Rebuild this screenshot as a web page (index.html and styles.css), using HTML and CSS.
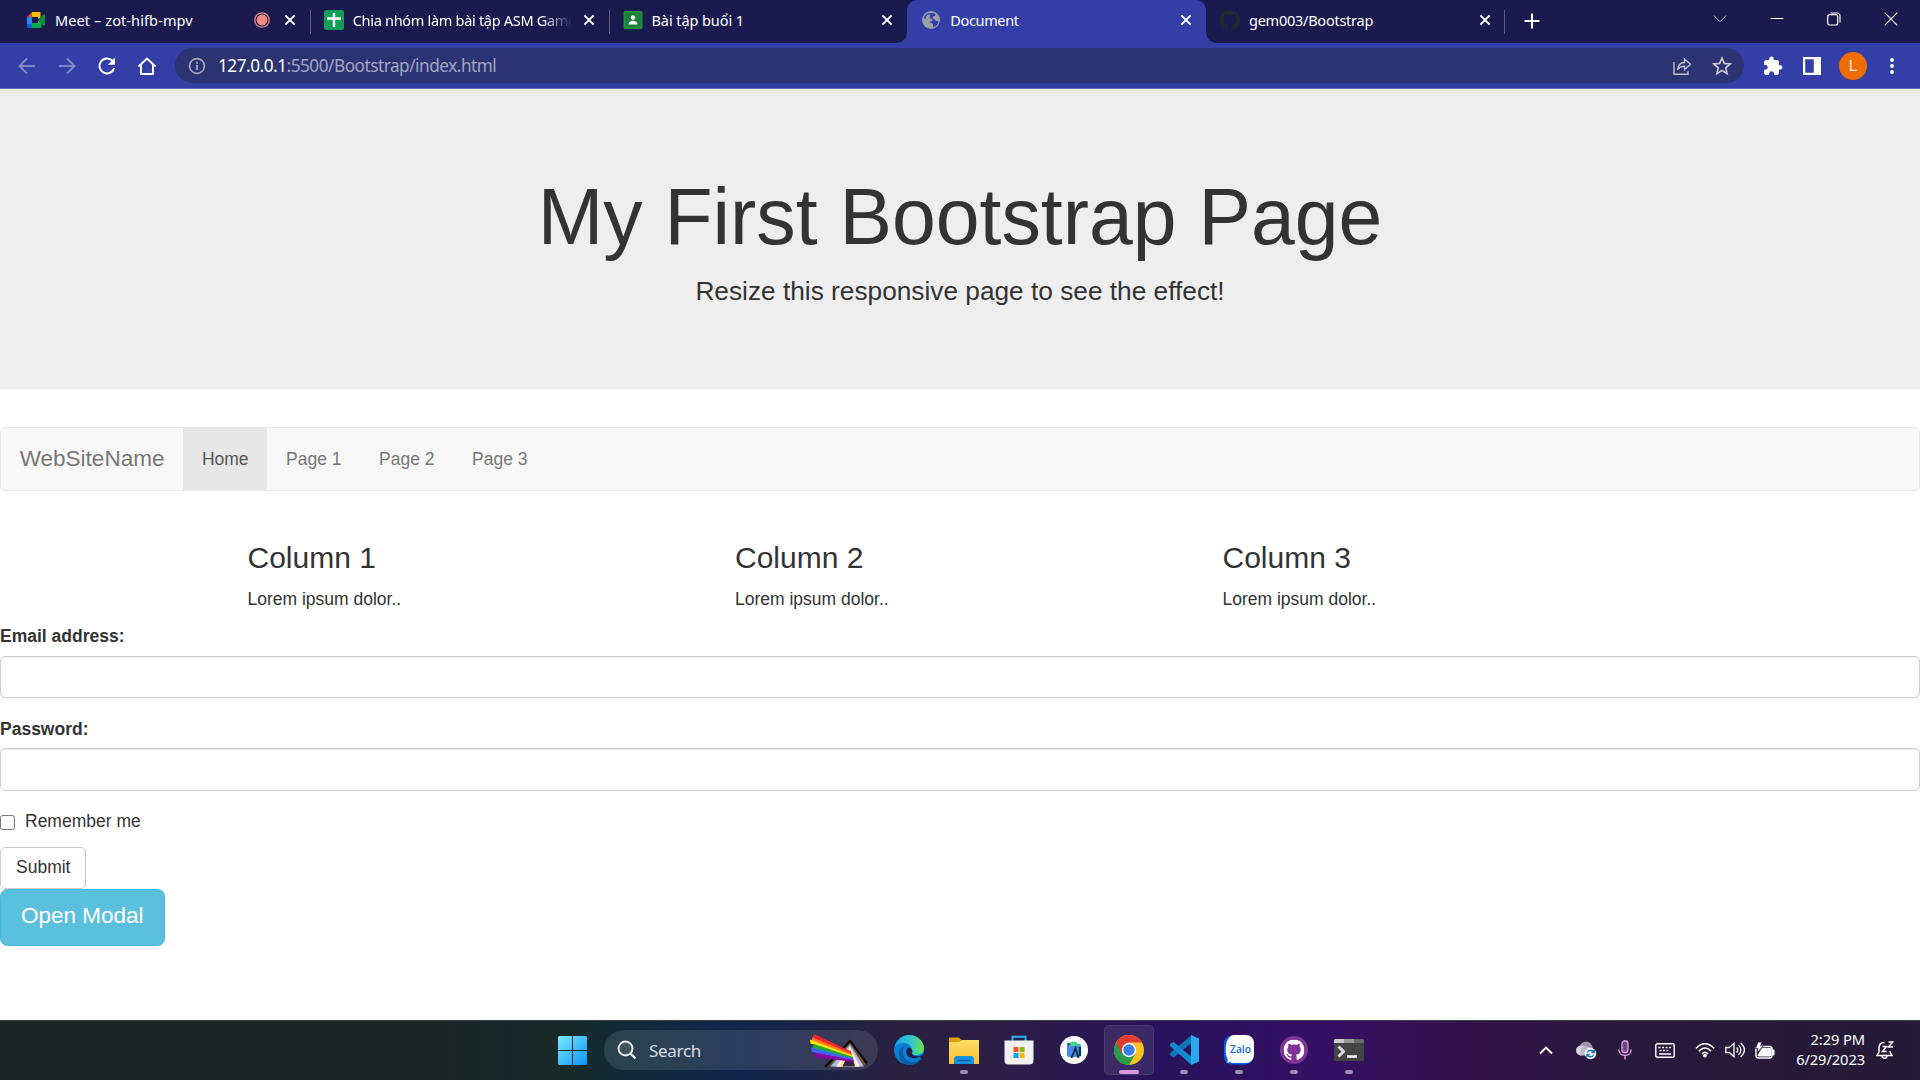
FILE: index.html
```html
<!DOCTYPE html>
<html lang="en">
<head>
<meta charset="utf-8">
<title>Document</title>
<link rel="stylesheet" href="styles.css">
</head>
<body>
<svg class="defs" width="0" height="0">
  <symbol id="x" viewBox="0 0 12 12"><path d="M1.400 1.400l9.200 9.200M10.600 1.400L1.400 10.600" stroke="#fff" stroke-width="1.900"/></symbol>
  <symbol id="octocat" viewBox="0 0 16 16"><path d="M8 0C3.58 0 0 3.58 0 8c0 3.54 2.29 6.53 5.47 7.59.4.07.55-.17.55-.38 0-.19-.01-.82-.01-1.49-2.01.37-2.53-.49-2.69-.94-.09-.23-.48-.94-.82-1.13-.28-.15-.68-.52-.01-.53.63-.01 1.08.58 1.23.82.72 1.21 1.87.87 2.33.66.07-.52.28-.87.51-1.07-1.78-.2-3.64-.89-3.64-3.95 0-.87.31-1.59.82-2.15-.08-.2-.36-1.02.08-2.12 0 0 .67-.21 2.2.82.64-.18 1.32-.27 2-.27s1.36.09 2 .27c1.53-1.04 2.2-.82 2.2-.82.44 1.1.16 1.92.08 2.12.51.56.82 1.27.82 2.15 0 3.07-1.87 3.75-3.65 3.95.29.25.54.73.54 1.48 0 1.07-.01 1.93-.01 2.2 0 .21.15.46.55.38A8.01 8.01 0 0 0 16 8c0-4.42-3.58-8-8-8z"/></symbol>
</svg>

<header class="tabs">
  <div class="tab meet">
    <svg class="fav" viewBox="0 0 20 20"><path d="M1 7h5v7H1z" fill="#2684fc"/><path d="M1 7l5-5v5z" fill="#ea4335"/><path d="M6 2h8.500v5.500L12 9V7H6z" fill="#ffba00"/><path d="M1 14h5v4H2.500A1.500 1.500 0 0 1 1 16.500z" fill="#0066da"/><path d="M6 13h6v-2l3.500-2.500V16.500A1.500 1.500 0 0 1 14 18H6z" fill="#00ac47"/><path d="M12 10l6-6 1 .5v11l-1 .5z" fill="#148b3c"/></svg>
    <span class="tab-title">Meet – zot-hifb-mpv</span>
    <svg class="rec" viewBox="0 0 16 16"><circle cx="8" cy="8" r="7.200" fill="none" stroke="#f28b82" stroke-width="1.300"/><circle cx="8" cy="8" r="5.400" fill="#f28b82"/></svg>
    <svg class="close"><use href="#x"/></svg>
  </div>
  <div class="tab line sheet">
    <svg class="fav" viewBox="0 0 20 20"><rect width="20" height="20" rx="2" fill="#0f9d58"/><path d="M10 3v14M3 8.500h14" stroke="#fff" stroke-width="2.400"/></svg>
    <span class="tab-title fade">Chia nhóm làm bài tập ASM Game</span>
    <svg class="close"><use href="#x"/></svg>
  </div>
  <div class="tab line classroom">
    <svg class="fav" viewBox="0 0 20 20"><rect x=".5" y="1" width="19" height="18" rx="1.500" fill="#1e8e3e"/><rect x="2.500" y="3" width="15" height="14" fill="#188038"/><circle cx="10" cy="7.500" r="2.200" fill="#fff"/><path d="M5.500 14.500c0-5 9-5 9 0z" fill="#fff"/></svg>
    <span class="tab-title">Bài tập buổi 1</span>
    <svg class="close"><use href="#x"/></svg>
  </div>
  <div class="tab active">
    <svg class="fav" viewBox="0 0 20 20"><circle cx="10" cy="10" r="9" fill="#9aa0a6"/><path d="M9 3c3 0 5 0 5.500 1.500S12 6 11.500 7.500s2 1 2.500 2.500 2.500.5 3.500 1.500c-.5 3-2.500 5-5 5.800-1-.8 0-2-.5-3.300s-2-1-3-1.500.5-2-.5-2.500-2.500 0-3.500-1S2.700 8 2.700 8C3.500 5 6 3 9 3z" fill="#333ea7"/><path d="M6.500 5c2-1 3.500 0 2.500 1.500s.5 2 2 3-.5 2.500-2 2-2-2-3.500-2.500S5 6 6.500 5z" fill="#9aa0a6"/></svg>
    <span class="tab-title">Document</span>
    <svg class="close"><use href="#x"/></svg>
  </div>
  <div class="tab github">
    <svg class="fav" fill="#24292f"><use href="#octocat"/></svg>
    <span class="tab-title">gem003/Bootstrap</span>
    <svg class="close"><use href="#x"/></svg>
  </div>
  <svg class="newtab" viewBox="0 0 16 16"><path d="M8 .5v15M.5 8h15" stroke="#fff" stroke-width="2.100"/></svg>
  <div class="winctl">
    <svg viewBox="0 0 14 14"><path d="M.8 3.500L7 9.800l6.200-6.300" fill="none" stroke="#c9c9dd"/></svg>
    <svg viewBox="0 0 14 14"><path d="M.5 6.500h13" stroke="#fff"/></svg>
    <svg viewBox="0 0 14 14"><rect x=".7" y="2.700" width="10" height="10.300" rx="2" fill="none" stroke="#fff" stroke-width="1.200"/><path d="M3.500 1H10a3 3 0 0 1 3 3v6.500" fill="none" stroke="#fff" stroke-width="1.100"/></svg>
    <svg viewBox="0 0 14 14"><path d="M.7.7l12.600 12.600M13.300.7L.7 13.300" stroke="#fff" stroke-width="1.100"/></svg>
  </div>
</header>

<div class="toolbar">
  <svg class="nav" viewBox="0 0 20 20" fill="none" stroke="#8288c9" stroke-width="1.900"><path d="M18 10H3M10 2.500L2.500 10l7.500 7.500"/></svg>
  <svg class="nav" viewBox="0 0 20 20" fill="none" stroke="#8288c9" stroke-width="1.900"><path d="M2 10h15M10 2.500l7.500 7.500-7.500 7.500"/></svg>
  <svg class="nav" viewBox="0 0 20 20"><path d="M15.500 4.800A7.500 7.500 0 1 0 17.200 12" fill="none" stroke="#fff" stroke-width="2"/><path d="M18 1.500v7.200h-7.200z" fill="#fff"/></svg>
  <svg class="nav" viewBox="0 0 20 20"><path d="M1.500 10.500L10 2.500l8.500 8M4 9v9h12V9" fill="none" stroke="#fff" stroke-width="2"/></svg>
  <div class="omnibox">
    <svg class="info" viewBox="0 0 18 18"><circle cx="9" cy="9" r="7.400" fill="none" stroke="#a6a9b8" stroke-width="1.700"/><path d="M9 8v5M9 4.800v1.900" stroke="#a6a9b8" stroke-width="1.800"/></svg>
    <span class="url"><b>127.0.0.1</b>:5500/Bootstrap/index.html</span>
    <svg class="share" viewBox="0 0 20 20" fill="none" stroke="#bdbfca" stroke-width="1.400"><path d="M2 6v12.200h14V15"/><path d="M5.500 14c.5-5 3-7.500 7-7.500V3l6 5.300-6 5.300v-3.400c-3.500 0-5.500 1.300-7 3.800z"/></svg>
    <svg class="star" viewBox="0 0 20 20"><path d="M10 2l2.300 5.400 5.900.5-4.500 3.900 1.400 5.800-5.100-3.100-5.100 3.100 1.400-5.800-4.500-3.900 5.900-.5z" fill="none" stroke="#c8cad3" stroke-width="1.600"/></svg>
  </div>
  <svg class="ext" viewBox="0 0 20 20"><path d="M17.200 9.200h-1.300V5.700c0-1-.8-1.800-1.800-1.800h-3.400V2.800a2.200 2.200 0 0 0-4.400 0v1.100H2.900c-1 0-1.800.8-1.800 1.800v3.200h1.300a2.400 2.400 0 0 1 0 4.800H1.100v3.400c0 1 .8 1.800 1.800 1.800h3.300v-1.300a2.400 2.400 0 0 1 4.800 0v1.300h3.100c1 0 1.800-.8 1.800-1.800v-3.500h1.300a2.200 2.200 0 0 0 0-4.400z" fill="#fff"/></svg>
  <svg class="panel" viewBox="0 0 18 18"><path d="M0 0h18v18H0zM2.200 2.200v13.600h8.600V2.200z" fill="#fff" fill-rule="evenodd"/></svg>
  <span class="avatar">L</span>
  <svg class="dots" viewBox="0 0 4 16" fill="#fff"><circle cx="2" cy="2" r="1.900"/><circle cx="2" cy="8" r="1.900"/><circle cx="2" cy="14" r="1.900"/></svg>
</div>

<main class="page">
  <section class="jumbotron">
    <h1>My First Bootstrap Page</h1>
    <p>Resize this responsive page to see the effect!</p>
  </section>
  <nav class="navbar">
    <a class="brand">WebSiteName</a>
    <a class="link current">Home</a>
    <a class="link">Page 1</a>
    <a class="link">Page 2</a>
    <a class="link">Page 3</a>
  </nav>
  <div class="row">
    <div class="col"><h3>Column 1</h3><p>Lorem ipsum dolor..</p></div>
    <div class="col"><h3>Column 2</h3><p>Lorem ipsum dolor..</p></div>
    <div class="col"><h3>Column 3</h3><p>Lorem ipsum dolor..</p></div>
  </div>
  <form>
    <div class="group"><label for="email">Email address:</label><input class="control" type="email" id="email"></div>
    <div class="group"><label for="pwd">Password:</label><input class="control" type="password" id="pwd"></div>
    <label class="check"><input type="checkbox">Remember me</label>
    <button class="btn" type="button">Submit</button>
  </form>
  <button class="btn btn-info" type="button">Open Modal</button>
</main>

<footer class="taskbar">
  <svg class="start" viewBox="0 0 29 29"><defs><linearGradient id="win" x1="0" y1="0" x2="29" y2="29" gradientUnits="userSpaceOnUse"><stop offset="0" stop-color="#7deaff"/><stop offset="1" stop-color="#0a94fa"/></linearGradient></defs><path d="M1 0h13v14H0V1zM15 0h13l1 1v13H15zM0 15h14v14H1l-1-1zM15 15h14v13l-1 1H15z" fill="url(#win)"/></svg>
  <div class="search">
    <svg class="glass" viewBox="0 0 20 20"><circle cx="8.500" cy="8.500" r="7" fill="#ffffff18" stroke="#e8ebef" stroke-width="1.900"/><path d="M13.500 13.500l5 5" stroke="#e8ebef" stroke-width="2.300"/></svg>
    <span>Search</span>
    <svg class="pride" viewBox="0 0 60 34">
      <path d="M15 32.500L41 5.500 59 28.500l-4 4z" fill="#080808"/>
      <path d="M18.500 32.500L41 8.500 57 30l-2 2.500z" fill="#7c4d30"/>
      <path d="M21.500 32.500L41 10.500 55 32.500z" fill="#76d0f1"/>
      <path d="M24.500 32.500L41 12 53 32.500z" fill="#f6aac3"/>
      <path d="M27.500 32.500L41 13 50.500 32.500z" fill="#fff"/>
      <path d="M30.500 32.500L41 14 48 32.500z" fill="#ffe088"/>
      <path d="M33.500 32.500L41 16l5 16.500z" fill="#2e2342"/>
      <path d="M5 0l37 17.500 1 3.500L3.500 4z" fill="#f5222d"/>
      <path d="M3.500 3.500L43 19.500v2.500L2 7.500z" fill="#ff7a1a"/>
      <path d="M1 5.500l42.500 16v2L1.500 9.500z" fill="#ffe600"/>
      <path d="M5 10l39 13v2L3 14.500z" fill="#21a83a"/>
      <path d="M2 13.500l42.500 11v2L3 18z" fill="#4263ff"/>
      <path d="M5 18.500l39.500 7.500.500 2L5 23z" fill="#8e00a8"/>
    </svg>
  </div>
  <div class="apps">
    <div class="app"><svg viewBox="0 0 30 30"><defs><linearGradient id="edge1" x1="0" x2="1"><stop offset="0" stop-color="#1ba0e7"/><stop offset=".55" stop-color="#34c6cf"/><stop offset="1" stop-color="#69e448"/></linearGradient></defs><circle cx="15" cy="15" r="15" fill="#087fd5"/><path d="M.8 12C3 4 9 0 15 0c9 0 15 7 15 13 0 5-4 7-7.500 7-4 0-6-1.500-5.500-3 1.500-2 1-7-4-8.500C8 7 3 9 .8 12z" fill="url(#edge1)"/><path d="M12 10c-4 3-4 8-2 12 3 6 10 7 17 2-3 4-7 6-12 6C8 30 5 24 5 19c0-5 3-8 7-9z" fill="#0c59a4"/><path d="M14.500 12.500c-3 2-3 6-.5 8.500 3 3 8 3 12 .5l4-2.500v3l-3 2c-1-1-2-3-2-3-3 1-7-.5-7-3 1.500-1.500 0-5-3.500-5.500z" fill="#24204a"/></svg></div>
    <div class="app open"><svg viewBox="0 0 30 30"><defs><linearGradient id="folder" x2="0" y2="1"><stop stop-color="#ffdc68"/><stop offset="1" stop-color="#fdc12e"/></linearGradient></defs><path d="M0 2.500h10l3 3V9H0z" fill="#e09f08"/><path d="M0 7h10l3-2h17v24H0z" fill="url(#folder)"/><path d="M5 29v-5a3 3 0 0 1 3-3h14a3 3 0 0 1 3 3v5z" fill="#168fdf"/><path d="M9 25.500h12" stroke="#0a60ab" stroke-width="1.500" stroke-linecap="round"/></svg></div>
    <div class="app"><svg viewBox="0 0 30 30"><path d="M8.500 6V1.700h13V6" fill="none" stroke="#24b3ed" stroke-width="2"/><path d="M.5 5.500h29v20a4 4 0 0 1-4 4h-21a4 4 0 0 1-4-4z" fill="#f1f1f2"/><path d="M9.500 12h5v5h-5z" fill="#f35325"/><path d="M15.500 12h5v5h-5z" fill="#81bc06"/><path d="M9.500 18h5v5h-5z" fill="#05a6f0"/><path d="M15.500 18h5v5h-5z" fill="#ffba08"/></svg></div>
    <div class="app"><svg viewBox="0 0 30 30"><circle cx="15" cy="15" r="14" fill="#fff"/><rect x="8" y="9" width="14" height="13" rx="2" fill="#4587f5"/><path d="M9 10c1-4 9-5 10-1l1 2H9z" fill="#3ddc84"/><path d="M8 8l4 1-3 2z" fill="#073042"/><path d="M12.500 23l4-10 3 10M21 12v9" fill="none" stroke="#083042" stroke-width="1.900"/></svg></div>
    <div class="app open focus"><svg viewBox="0 0 30 30"><circle cx="15" cy="15" r="15" fill="#fcc31e"/><path d="M2 7.500A15 15 0 0 0 15 30l6.500-11.200L15 15z" fill="#269c4a"/><path d="M15 7.500h13A15 15 0 0 0 2 7.500L8.500 19 15 15z" fill="#e33b2e"/><circle cx="15" cy="15" r="7.200" fill="#fff"/><circle cx="15" cy="15" r="5.700" fill="#397fec"/></svg></div>
    <div class="app open"><svg viewBox="0 0 30 30"><path d="M22 .5v8L4.500 22.500 1 20v-1.800z" fill="#0b75b8"/><path d="M22 29.500v-8L4.500 7 1 9v2z" fill="#128bd0"/><path d="M22 0l8 3.500v23L22 30z" fill="#29a9f2"/></svg></div>
    <div class="app open"><svg viewBox="0 0 30 30"><rect y=".5" width="29" height="29" rx="8" fill="#0563ea"/><path d="M10 0h12a8 8 0 0 1 8 8v12a8 8 0 0 1-8 8H10c-2 0-3-.5-4-1l-4 1c2-1 2-2 1.500-4C1 19 1 7 5 3c1.500-2 3-3 5-3z" fill="#fff"/><text x="6" y="17.500" class="zalo" textLength="21" lengthAdjust="spacingAndGlyphs">Zalo</text></svg></div>
    <div class="app open"><svg viewBox="0 0 30 30"><circle cx="15" cy="15" r="14" fill="#813395"/><svg x="4.500" y="4.500" width="21" height="21" fill="#fff"><use href="#octocat"/></svg></svg></div>
    <div class="app open"><svg viewBox="0 0 30 30"><path d="M0 5.500a1.500 1.500 0 0 1 1.500-1.500h27A1.500 1.500 0 0 1 30 5.500V24.500a1.500 1.500 0 0 1-1.500 1.500h-27A1.500 1.500 0 0 1 0 24.500z" fill="#444"/><path d="M0 8V5.500A1.500 1.500 0 0 1 1.500 4H10v4z" fill="#ccc"/><path d="M10 4h10v4H10z" fill="#999"/><path d="M20 4h8.500A1.500 1.500 0 0 1 30 5.500V8H20z" fill="#686868"/><path d="M4.500 11.500l5 5-5 5" fill="none" stroke="#d8d8d8" stroke-width="3"/><path d="M13 21.500h10" stroke="#fff" stroke-width="2.500"/></svg></div>
  </div>
  <div class="tray">
    <svg class="t-up" viewBox="0 0 14 10"><path d="M1 8.500L7 2.500l6 6" fill="none" stroke="#fff" stroke-width="1.900"/></svg>
    <svg class="t-cloud" viewBox="0 0 22 20"><circle cx="11" cy="8" r="6.500" fill="#9b97a6"/><circle cx="6" cy="10.500" r="5" fill="#d8d6df"/><path d="M6 8c6-4 12 0 12 5v2.500H5z" fill="#bdb8c8"/><circle cx="15.500" cy="13.500" r="5.700" fill="#fff"/><path d="M12 12.500c1.500-3 5.500-3 7 0M12 14.500c1.500 3 5.500 3 7 0M19.200 9.500v3h-3M11.800 17.500v-3h3" fill="none" stroke="#1372c4" stroke-width="1.300"/></svg>
    <svg class="t-mic" viewBox="0 0 14 20"><rect x="4" y=".8" width="6" height="12" rx="3" fill="#714b80" stroke="#d59bdc" stroke-width="1.400"/><path d="M.8 9.500c0 8 12.400 8 12.400 0M7 15.500v4" fill="none" stroke="#d59bdc" stroke-width="1.500"/></svg>
    <svg class="t-key" viewBox="0 0 20 15"><rect x=".8" y=".8" width="18.400" height="13.400" rx="1.500" fill="none" stroke="#fff" stroke-width="1.400"/><path d="M3.500 4.500h2m1.500 0h2m1.500 0h2m1.500 0h2M4.500 7.500h2m1.500 0h2m1.500 0h2M4 11h12" stroke="#fff" stroke-width="1.500"/></svg>
    <svg class="t-wifi" viewBox="0 0 20 16"><path d="M1 6.500c5-6.500 13-6.500 18 0M4 9.300c3.500-4.500 8.500-4.500 12 0M6.900 12c2-2.500 4.200-2.500 6.200 0" fill="none" stroke="#fff" stroke-width="1.500"/><circle cx="10" cy="13.600" r="1.900" fill="#fff"/></svg>
    <svg class="t-vol" viewBox="0 0 20 16"><path d="M.8 5.500h3.500L9 1.300v13.400l-4.700-4.200H.8zM11.500 5.500c1.500 1.500 1.500 3.500 0 5M13.500 3.200c3.300 3 3.300 6.600 0 9.600M15.700 1c5 4.500 5 9.500 0 14" fill="none" stroke="#fff" stroke-width="1.300"/></svg>
    <svg class="t-bat" viewBox="0 0 20 17"><rect x="1" y="4.500" width="16" height="11.500" rx="2.500" fill="none" stroke="#fff" stroke-width="1.500"/><path d="M3 13.500l4-7h8.500v7.500H3.500zM17.500 8h1.500v5h-1.500z" fill="#fff" stroke="#fff"/><path d="M3 0h4L5.500 3.500h3L2 11l1-4.500H.5z" fill="#fff" stroke="#271a3b" stroke-width=".7"/></svg>
    <div class="clock"><span>2:29 PM</span><span>6/29/2023</span></div>
    <svg class="t-bell" viewBox="0 0 18 18"><path d="M8.500 1.500C4 1.500 3 4.500 3 7v4L1 14.500h15L14 11v-1M6 15c.5 3 4.500 3 5 0" fill="none" stroke="#fff" stroke-width="1.500"/><path d="M6.500 5.500h4l-4 5h4.300M12.500 1h4.200l-4.200 5H17" fill="none" stroke="#fff" stroke-width="1.500"/></svg>
  </div>
</footer>
</body>
</html>
```
FILE: styles.css
```css
* { box-sizing: border-box; }
body {
  margin: 0; width: 1920px; height: 1080px; overflow: hidden;
  display: grid; grid-template-rows: 43px 46px 931px 60px;
  background: #fff; color: #333;
  font-family: "Liberation Sans", Arial, sans-serif; font-size: 17.5px; line-height: 25px;
}
svg { display: block; flex: none; }
.defs { position: absolute; }

.tabs { display: flex; background: #1b1a4e; padding-left: 11px; font-family: "Noto Sans", sans-serif; }
.tab { width: 298.75px; height: 43px; flex: none; display: flex; align-items: center; padding: 0 14px 3px 14px; color: #fff; font-size: 14.5px; position: relative; }
.tab.line::before, .tab.github::after { content: ""; position: absolute; left: 0; top: 10px; width: 1px; height: 24px; background: #5d5c84; }
.tab.github::after { left: auto; right: 0; }
.fav { width: 20px; height: 20px; margin-right: 9px; }
.tab-title { flex: 1; overflow: hidden; white-space: nowrap; letter-spacing: -.35px; line-height: 24px; }
.meet .tab-title { letter-spacing: .1px; }
.sheet .tab-title { letter-spacing: -.3px; }
.classroom .tab-title { letter-spacing: -.08px; }
.github .tab-title { letter-spacing: -.25px; }
.meet .fav, .meet .tab-title { margin-left: 1px; }
.meet .fav { margin-right: 8px; }
.fade { -webkit-mask-image: linear-gradient(90deg, #000 86%, transparent); mask-image: linear-gradient(90deg, #000 86%, transparent); margin-right: 11px; }
.rec { width: 16px; height: 16px; margin-right: 14px; }
.close { width: 12px; height: 12px; }
.tab.active { background: #333ea7; border-radius: 10px 10px 0 0; }
.tab.active::before, .tab.active::after { content: ""; position: absolute; bottom: 0; width: 10px; height: 10px; background: radial-gradient(circle at 0 0, transparent 9.5px, #333ea7 10px); }
.tab.active::before { left: -10px; }
.tab.active::after { right: -10px; background: radial-gradient(circle at 100% 0, transparent 9.5px, #333ea7 10px); }
.newtab { width: 16px; height: 16px; margin: 13px 0 0 19px; }
.winctl { display: flex; gap: 43px; margin: 12px 22px 0 auto; }
.winctl svg { width: 14px; height: 14px; }

.toolbar { display: flex; align-items: center; background: #333ea7; border-bottom: 1px solid #6a70b6; padding: 0 26px 0 17px; font-family: "Noto Sans", sans-serif; }
.nav { width: 20px; height: 20px; margin-right: 20px; }
.omnibox { width: 1569px; height: 35px; margin-left: -2px; border-radius: 18px; background: #2c3373; display: flex; align-items: center; padding: 0 12px 0 13px; }
.info { width: 18px; height: 18px; }
.url { margin-left: 12px; color: #a2a5c3; font-size: 17.2px; letter-spacing: -.48px; flex: 1; }
.url b { font-weight: 400; color: #fff; }
.share { width: 20px; height: 20px; margin-right: 20px; }
.star { width: 20px; height: 20px; }
.ext { width: 20px; height: 20px; margin-left: 19px; }
.panel { width: 18px; height: 18px; margin-left: 20px; }
.avatar { width: 28px; height: 28px; border-radius: 50%; background: #ef6c00; color: #ffe9d8; font: 15.5px/28px Roboto, sans-serif; text-align: center; margin-left: 18px; }
.dots { width: 4px; height: 16px; margin-left: auto; }

.page h1, .page h3 { font-weight: 400; line-height: 1.1; margin: 0; }
.jumbotron { height: 300.4px; background: #eee; text-align: center; padding-top: 84.5px; margin-bottom: 37.5px; }
.jumbotron h1 { font-size: 78.75px; }
.jumbotron p { margin: 12.5px 0 0; font-size: 26.25px; line-height: 37.5px; }
.navbar { display: flex; height: 64.5px; background: #f8f8f8; border: 1px solid #e7e7e7; border-radius: 5px; margin-bottom: 25px; line-height: 25px; color: #777; }
.brand { padding: 17.75px 18.75px; font-size: 22.5px; }
.link { padding: 18.75px; }
.current { background: #e7e7e7; color: #555; }
.row { width: 1462.5px; margin: 0 auto; display: flex; }
.col { width: 487.5px; padding: 25px 18.75px 12.5px; }
.page h3 { font-size: 30px; }
.col p { margin: 12.5px 0 0; }
.group { margin-bottom: 18.75px; }
.group label { display: block; font-weight: 700; margin-bottom: 6.25px; }
.control { display: block; width: 100%; height: 42.5px; border: 1px solid #ccc; border-radius: 5px; background: #fff; box-shadow: inset 0 1px 1px rgba(0, 0, 0, .075); padding: 7.5px 15px; }
.check { display: flex; align-items: center; height: 25px; margin-bottom: 12.5px; }
.check input { width: 15px; height: 15px; margin: 1px 10px 0 0; }
.btn { display: block; height: 42.5px; padding: 0 15px 2px; border: 1px solid #ccc; border-radius: 5px; background: #fff; color: #333; font: 17.5px/25px "Liberation Sans", Arial, sans-serif; }
.btn-info { height: 57px; padding: 0 20px 4px; background: #5bc0de; border-color: #46b8da; border-radius: 7.5px; color: #fff; font-size: 22.5px; }

.taskbar { display: flex; align-items: flex-start; border-top: 1px solid #3c4447; color: #fff; padding-left: 558px; font-family: "Noto Sans", sans-serif;
  background: linear-gradient(90deg, #1c2625 0, #1c2625 440px, #182829 510px, #1a2927 550px, #112b3b 640px, #12264c 740px, #29203f 900px, #2b1d48 1020px, #29135c 1160px, #331064 1330px, #34124c 1450px, #2a183e 1600px, #241b35 1920px); }
.start { width: 29px; height: 29px; margin-top: 15px; }
.search { width: 274px; height: 40px; border-radius: 20px; margin: 9px 0 0 17px; background: #ffffff1c; display: flex; align-items: center; padding-left: 13px; }
.search span { flex: 1; margin-left: 12px; font-size: 17px; color: #d9dde3; letter-spacing: -.3px; }
.glass { width: 20px; height: 20px; }
.pride { width: 60px; height: 34px; margin: 2px 9px 0 0; }
.apps { display: flex; gap: 5px; margin: 4px 0 0 6px; }
.app { width: 50px; height: 50px; padding: 10px; border-radius: 5px; position: relative; }
.app > svg { width: 30px; height: 30px; }
.focus { background: #ffffff16; box-shadow: inset 0 0 0 1px #ffffff14; }
.open::after { content: ""; position: absolute; left: 21px; bottom: 1px; width: 8px; height: 4px; border-radius: 2px; background: #9b8fae; }
.focus::after { left: 15px; width: 20px; background: #d99be0; }
.zalo { font: 600 10px "Open Sans", sans-serif; fill: #1769df; }
.tray { display: flex; align-items: center; height: 58px; margin: 0 26px 0 auto; }
.t-up { width: 14px; height: 10px; margin-right: 22px; }
.t-cloud { width: 22px; height: 20px; margin-right: 21px; }
.t-mic { width: 14px; height: 20px; margin-right: 23px; }
.t-key { width: 20px; height: 15px; margin-right: 20px; }
.t-wifi { width: 20px; height: 16px; margin-right: 10px; }
.t-vol { width: 20px; height: 16px; margin-right: 10px; }
.t-bat { width: 20px; height: 17px; margin-right: 20px; }
.clock { width: 70px; display: flex; flex-direction: column; align-items: flex-end; font-size: 14.7px; line-height: 20px; letter-spacing: -.1px; margin: 0 11px 2px 0; }
.t-bell { width: 18px; height: 18px; }
```
